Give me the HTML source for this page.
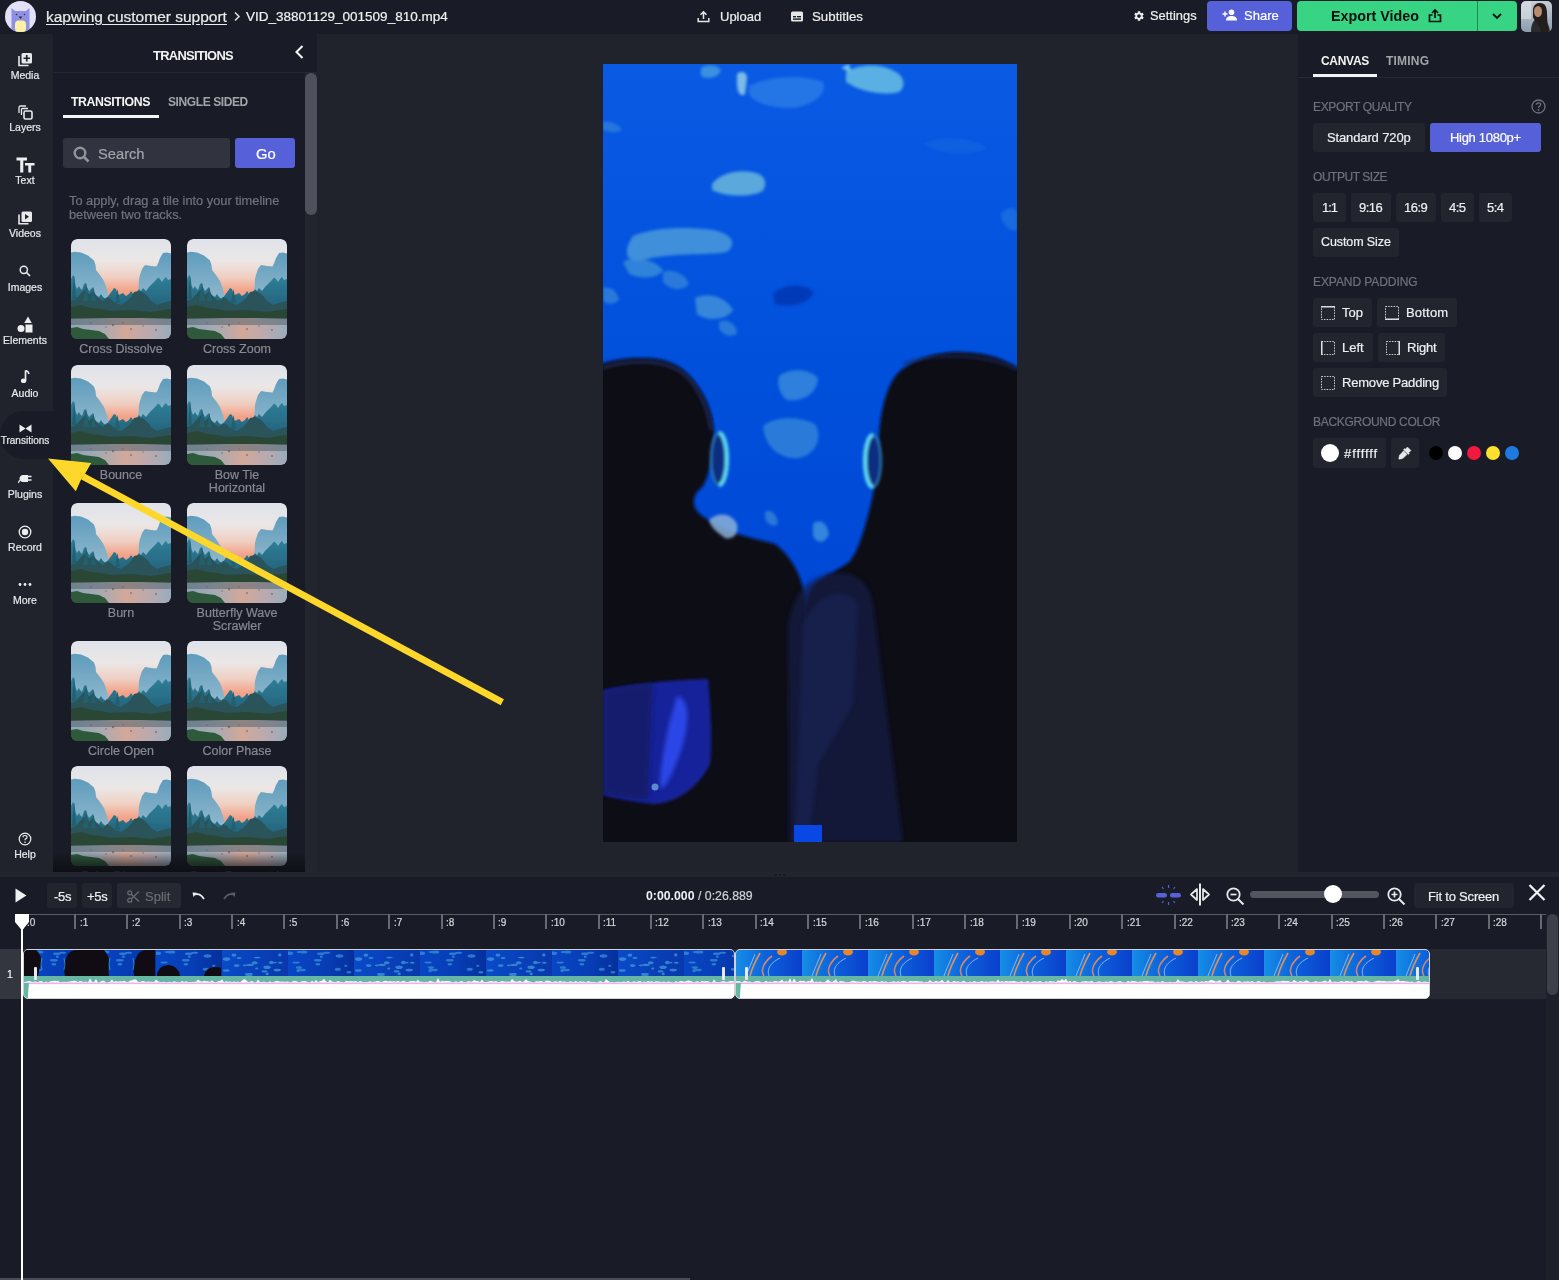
<!DOCTYPE html>
<html><head><meta charset="utf-8">
<style>
*{box-sizing:border-box;margin:0;padding:0}
html,body{width:1559px;height:1280px;overflow:hidden;background:#191c26;font-family:"Liberation Sans",sans-serif;color:#fff}
.t,.sl,.tl{-webkit-text-stroke:0.2px currentColor;will-change:transform}
.t[style*="font-weight:bold"],b{-webkit-text-stroke:0}
.a{position:absolute}
.t{position:absolute;white-space:nowrap;line-height:1}
#top{left:0;top:0;width:1559px;height:34px;background:#191c26}
#side{left:0;top:34px;width:53px;height:838px;background:#20232c}
#panel{left:53px;top:34px;width:264px;height:838px;background:#191c26;overflow:hidden}
#canvas{left:317px;top:34px;width:981px;height:838px;background:#20232c}
#right{left:1298px;top:34px;width:261px;height:838px;background:#191c26}
#strip{left:0;top:872px;width:1559px;height:5px;background:#22252e}
#tl{left:0;top:877px;width:1559px;height:403px;background:#191c26}
.sl{position:absolute;left:0;width:50px;text-align:center;font-size:10.5px;color:#e8e9ec;line-height:1}
.btn{position:absolute;background:#262a33;border-radius:3px}
.lbl{position:absolute;font-size:12.5px;color:#6d7079;white-space:nowrap;line-height:1}
.bt{position:absolute;font-size:13px;color:#eceef1;white-space:nowrap;line-height:1}
.tile{position:absolute;width:100px;height:100px;border-radius:6px;overflow:hidden}
.tl{position:absolute;width:116px;text-align:center;font-size:12.5px;color:#868993;line-height:13px}
</style></head><body>
<div id="top" class="a"></div>
<div id="side" class="a"></div>
<div id="panel" class="a"></div>
<div id="canvas" class="a"></div>
<div id="right" class="a"></div>
<div id="strip" class="a"></div>
<div id="tl" class="a"></div>
<!-- TOP BAR -->
<svg class="a" style="left:5px;top:1px" width="31" height="31" viewBox="0 0 31 31">
 <defs><clipPath id="avc"><circle cx="15.5" cy="15.5" r="15.5"/></clipPath></defs>
 <circle cx="15.5" cy="15.5" r="15.5" fill="#e3e1fa"/>
 <g clip-path="url(#avc)">
  <path d="M6.5 7 L10 10 L21 10 L24.5 7 L24.5 31 L6.5 31 Z" fill="#8d90e4"/>
  <rect x="10" y="19.5" width="11" height="12" rx="4" fill="#fbf1a6"/>
  <path d="M13.5 15.5 L17.5 15.5 L15.5 18 Z" fill="#333"/>
  <circle cx="11.5" cy="13.5" r="0.8" fill="#333"/><circle cx="19.5" cy="13.5" r="0.8" fill="#333"/>
 </g>
</svg>
<div class="t" style="left:46px;top:8.9px;font-size:15.5px;color:#ebebeb;text-decoration:underline;text-underline-offset:2px">kapwing customer support</div>
<svg class="a" style="left:233px;top:11px" width="8" height="11" viewBox="0 0 8 11"><path d="M2 1.5 L6 5.5 L2 9.5" stroke="#ddd" stroke-width="1.6" fill="none"/></svg>
<div class="t" style="left:246px;top:10.1px;font-size:13.5px;color:#f1f1f1">VID_38801129_001509_810.mp4</div>
<!-- upload -->
<svg class="a" style="left:697px;top:10px" width="13" height="13" viewBox="0 0 13 13"><path d="M6.5 9 V2 M3.5 4.8 L6.5 1.8 L9.5 4.8" stroke="#e6e6e6" stroke-width="1.5" fill="none"/><path d="M1.2 8 V11.5 H11.8 V8" stroke="#e6e6e6" stroke-width="1.5" fill="none"/></svg>
<div class="t" style="left:720px;top:10px;font-size:13px;color:#eeeeee">Upload</div>
<svg class="a" style="left:791px;top:11px" width="12" height="11" viewBox="0 0 12 11"><rect x="0" y="0.5" width="12" height="10" rx="1.5" fill="#e6e6e6"/><rect x="2" y="5" width="3" height="1.4" fill="#191c26"/><rect x="6" y="5" width="4" height="1.4" fill="#191c26"/><rect x="2" y="7.4" width="8" height="1.4" fill="#191c26"/></svg>
<div class="t" style="left:812px;top:10px;font-size:13.3px;color:#eeeeee">Subtitles</div>
<!-- settings -->
<svg class="a" style="left:1133px;top:10px" width="12" height="12" viewBox="0 0 24 24"><path fill="#eee" d="M19.14 12.94c.04-.3.06-.61.06-.94 0-.32-.02-.64-.07-.94l2.03-1.58a.49.49 0 0 0 .12-.61l-1.92-3.32a.488.488 0 0 0-.59-.22l-2.39.96c-.5-.38-1.03-.7-1.62-.94l-.36-2.54a.484.484 0 0 0-.48-.41h-3.84c-.24 0-.43.17-.47.41l-.36 2.54c-.59.24-1.13.57-1.62.94l-2.39-.96c-.22-.08-.47 0-.59.22L2.74 8.87c-.12.21-.08.47.12.61l2.03 1.58c-.05.3-.09.63-.09.94s.02.64.07.94l-2.03 1.58a.49.49 0 0 0-.12.61l1.92 3.32c.12.22.37.29.59.22l2.39-.96c.5.38 1.03.7 1.62.94l.36 2.54c.05.24.24.41.48.41h3.84c.24 0 .44-.17.47-.41l.36-2.54c.59-.24 1.13-.56 1.62-.94l2.39.96c.22.08.47 0 .59-.22l1.92-3.32c.12-.22.07-.47-.12-.61l-2.01-1.58zM12 15.6c-1.98 0-3.6-1.62-3.6-3.6s1.62-3.6 3.6-3.6 3.6 1.62 3.6 3.6-1.62 3.6-3.6 3.6z"/></svg>
<div class="t" style="left:1150px;top:10px;font-size:12.9px;color:#eeeeee">Settings</div>
<div class="a" style="left:1207px;top:1px;width:85px;height:30px;background:#5560d9;border-radius:4px"></div>
<svg class="a" style="left:1222px;top:9px" width="15" height="12" viewBox="0 0 15 12"><circle cx="9.5" cy="3.2" r="2.8" fill="#fff"/><path d="M4 11.5 C4 8 6.5 7 9.5 7 S15 8 15 11.5 Z" fill="#fff"/><path d="M0.5 5 H5.5 M3 2.5 V7.5" stroke="#fff" stroke-width="1.4"/></svg>
<div class="t" style="left:1243.5px;top:8.8px;font-size:13px;color:#ffffff">Share</div>
<div class="a" style="left:1297px;top:1px;width:220px;height:30px;background:#36d483;border-radius:4px"></div>
<div class="a" style="left:1477px;top:1px;width:1px;height:30px;background:#1f8a52"></div>
<div class="t" style="left:1331px;top:9px;font-size:14.3px;font-weight:bold;color:#101010">Export Video</div>
<svg class="a" style="left:1428px;top:8px" width="14" height="15" viewBox="0 0 14 15"><path d="M7 10 V2 M4 5 L7 2 L10 5" stroke="#111" stroke-width="1.7" fill="none"/><path d="M4.5 7 H1.5 V13.5 H12.5 V7 H9.5" stroke="#111" stroke-width="1.7" fill="none"/></svg>
<svg class="a" style="left:1491px;top:12px" width="12" height="8" viewBox="0 0 12 8"><path d="M2 2 L6 6 L10 2" stroke="#111" stroke-width="1.8" fill="none"/></svg>
<svg class="a" style="left:1521px;top:1px;border-radius:5px" width="31" height="31" viewBox="0 0 31 31">
 <defs><linearGradient id="avbg" x1="0" y1="0" x2="0" y2="1"><stop offset="0" stop-color="#c5ccd4"/><stop offset="0.5" stop-color="#aab6c2"/><stop offset="1" stop-color="#8a9cae"/></linearGradient></defs>
 <rect width="31" height="31" fill="url(#avbg)"/>
 <rect x="0" y="0" width="10" height="18" fill="#dde2e8" opacity="0.6"/>
 <path d="M10 31 C10 22 13 18 18 17 C24 17 28 22 29 31 Z" fill="#2a2a2e"/>
 <path d="M12 10 C12 3 16 2 19 2 C24 2 26 6 26 12 C26 20 27 26 28 31 L20 31 C20 24 14 22 12 16 Z" fill="#231d1c"/>
 <ellipse cx="17" cy="10.5" rx="4" ry="5.5" fill="#b88a70"/>
</svg>

<!-- SIDEBAR -->
<div class="a" style="left:0;top:411px;width:53px;height:48px;background:#191c26;border-radius:24px 0 0 24px"></div>
<svg class="a" style="left:18px;top:52px" width="15" height="15" viewBox="0 0 15 15"><path d="M1 4 V13.5 H10.5" stroke="#e8e9ec" stroke-width="1.6" fill="none"/><rect x="3.5" y="1" width="10.5" height="10.5" rx="1.5" fill="#e8e9ec"/><path d="M8.75 3 V9.5 M5.5 6.25 H12" stroke="#20232c" stroke-width="1.7"/></svg>
<div class="sl" style="top:69.6px">Media</div>
<svg class="a" style="left:18px;top:105px" width="15" height="15" viewBox="0 0 15 15"><path d="M1 8 V2.5 Q1 1 2.5 1 H8" stroke="#e8e9ec" stroke-width="1.3" fill="none"/><path d="M3.5 10 V4.5 Q3.5 3.5 4.5 3.5 H10" stroke="#e8e9ec" stroke-width="1.3" fill="none"/><rect x="6" y="6" width="8" height="8" rx="1.5" stroke="#e8e9ec" stroke-width="1.6" fill="none"/></svg>
<div class="sl" style="top:122.1px">Layers</div>
<svg class="a" style="left:16px;top:157px" width="19" height="16" viewBox="0 0 19 16"><path d="M0.5 0.5 H11 V3.5 H7.3 V15.5 H4.2 V3.5 H0.5 Z" fill="#eceef0"/><path d="M9 6 H18.5 V8.5 H15.2 V15.5 H12.3 V8.5 H9 Z" fill="#eceef0"/></svg>
<div class="sl" style="top:175.1px">Text</div>
<svg class="a" style="left:18px;top:211px" width="15" height="14" viewBox="0 0 15 14"><path d="M1 3.5 V12.8 H10.5" stroke="#e8e9ec" stroke-width="1.6" fill="none"/><rect x="3.5" y="0.5" width="10.5" height="10.5" rx="1.5" fill="#e8e9ec"/><path d="M7 3 L11 5.75 L7 8.5 Z" fill="#20232c"/></svg>
<div class="sl" style="top:227.6px">Videos</div>
<svg class="a" style="left:19px;top:265px" width="12" height="12" viewBox="0 0 12 12"><circle cx="4.8" cy="4.8" r="3.6" stroke="#e8e9ec" stroke-width="1.5" fill="none"/><path d="M7.5 7.5 L11 11" stroke="#e8e9ec" stroke-width="1.7"/></svg>
<div class="sl" style="top:281.6px">Images</div>
<svg class="a" style="left:17px;top:316px" width="16" height="17" viewBox="0 0 16 17"><path d="M11 0.5 L14.8 7 H7.2 Z" fill="#eceef0"/><circle cx="4" cy="12.5" r="3.5" fill="#eceef0"/><rect x="8.5" y="8.5" width="7" height="8" fill="#eceef0"/></svg>
<div class="sl" style="top:334.6px">Elements</div>
<svg class="a" style="left:20px;top:370px" width="10" height="14" viewBox="0 0 10 14"><path d="M5.5 0.5 V10.5" stroke="#eceef0" stroke-width="1.7"/><path d="M5.5 0.5 Q8.5 1 9 4" stroke="#eceef0" stroke-width="1.6" fill="none"/><ellipse cx="3.6" cy="10.8" rx="2.7" ry="2.3" fill="#eceef0"/></svg>
<div class="sl" style="top:387.6px">Audio</div>
<svg class="a" style="left:19px;top:424px" width="13" height="9" viewBox="0 0 13 9"><path d="M0.5 0.5 L6.5 4.5 L0.5 8.5 Z M12.5 0.5 L6.5 4.5 L12.5 8.5 Z" fill="#eceef0"/></svg>
<div class="sl" style="top:436.3px;font-size:10px">Transitions</div>
<svg class="a" style="left:18px;top:473px" width="14" height="11" viewBox="0 0 14 11"><path d="M5 2 H10 V9 H5 Q2 9 1.5 5.5 Q2 2 5 2 Z" fill="#eceef0"/><path d="M10 3.5 H13.5 M10 7 H13.5" stroke="#eceef0" stroke-width="1.3"/><path d="M2 7 L0 10" stroke="#eceef0" stroke-width="1.3"/></svg>
<div class="sl" style="top:488.6px">Plugins</div>
<svg class="a" style="left:18px;top:525px" width="14" height="14" viewBox="0 0 14 14"><circle cx="7" cy="7" r="5.8" stroke="#eceef0" stroke-width="1.3" fill="none"/><circle cx="7" cy="7" r="3.2" fill="#eceef0"/></svg>
<div class="sl" style="top:541.6px">Record</div>
<svg class="a" style="left:18px;top:582px" width="14" height="5" viewBox="0 0 14 5"><circle cx="2" cy="2.5" r="1.4" fill="#eceef0"/><circle cx="7" cy="2.5" r="1.4" fill="#eceef0"/><circle cx="12" cy="2.5" r="1.4" fill="#eceef0"/></svg>
<div class="sl" style="top:594.6px">More</div>
<svg class="a" style="left:18px;top:832px" width="14" height="14" viewBox="0 0 14 14"><circle cx="7" cy="7" r="5.8" stroke="#eceef0" stroke-width="1.2" fill="none"/><path d="M5 5.3 Q5 3.5 7 3.5 Q9 3.5 9 5.2 Q9 6.3 7.6 6.9 Q7 7.2 7 8.3" stroke="#eceef0" stroke-width="1.2" fill="none"/><circle cx="7" cy="10.2" r="0.8" fill="#eceef0"/></svg>
<div class="sl" style="top:848.6px">Help</div>

<!-- PANEL -->
<svg width="0" height="0" style="position:absolute">
 <defs>
  <linearGradient id="sky" x1="0" y1="0" x2="0" y2="1">
   <stop offset="0" stop-color="#dfe3ea"/><stop offset="0.22" stop-color="#ebe7e6"/><stop offset="0.38" stop-color="#f0cfc2"/><stop offset="0.52" stop-color="#f2a288"/><stop offset="0.7" stop-color="#ee9a80"/>
  </linearGradient>
  <linearGradient id="mtn" x1="0" y1="0" x2="0" y2="1">
   <stop offset="0" stop-color="#5f9cbd"/><stop offset="1" stop-color="#9bbfd0"/>
  </linearGradient>
  <linearGradient id="water" x1="0" y1="0" x2="1" y2="0">
   <stop offset="0" stop-color="#8ea6b4"/><stop offset="0.3" stop-color="#a8aab2"/><stop offset="0.55" stop-color="#d3a898"/><stop offset="0.8" stop-color="#b8aab0"/><stop offset="1" stop-color="#98acbc"/>
  </linearGradient>
  <filter id="bl" x="-5%" y="-5%" width="110%" height="110%"><feGaussianBlur stdDeviation="0.5"/></filter>
  <linearGradient id="forest" x1="0" y1="0" x2="0" y2="1"><stop offset="0" stop-color="#2f8098"/><stop offset="1" stop-color="#24607a"/></linearGradient>
  <symbol id="land" viewBox="0 0 100 100">
   <rect width="100" height="100" fill="url(#sky)"/>
   <g filter="url(#bl)">
   <path d="M0 13.5 L4 12.8 L10 13.5 L17 16.5 L23 21.5 L24.5 26 L25 31 L29 36 L33 42 L36 50 L37.5 56 L38 62 L38 72 L0 72 Z" fill="url(#mtn)"/>
   <path d="M100 14.5 L96 13.5 L92 14 L89 19 L87 24.5 L85.5 27.5 L80 27 L74 26 L71 30 L69 36 L68 40 L67.5 50 L66 56 L62 60 L62 72 L100 72 Z" fill="url(#mtn)"/>
   <path d="M0 72 L0 40 L2 36 L3.5 38 L4.5 46 L6 50 L8 47 L9 49 L11 51 L13 45 L15 44 L16 48 L18 52 L20 50 L22 48 L23 53 L25 56 L28 58 L30 55 L32 58 L35 60 L38 56 L41 52 L43 49 L45 50 L47 56 L50 55 L52 54 L55 57 L58 55 L60 52 L62 55 L65 54 L68 50 L70 52 L72 49 L75 52 L78 48 L82 44 L85 41 L87 38.5 L89 40 L91 43 L93 40 L95 38 L97 41 L100 40 L100 72 Z" fill="url(#forest)"/>
   <path d="M0 80 L0 62 L5 60 L12 52 L15 50 L18 56 L22 52 L26 58 L32 62 L36 58 L40 60 L44 64 L50 66 L56 62 L60 58 L63 53 L68 52 L73 54 L77 58 L80 62 L86 66 L92 64 L100 62 L100 80 Z" fill="#29525a"/>
   <path d="M0 68 L10 66 L20 69 L30 70 L40 72 L60 71 L80 73 L100 70 L100 81 L0 81 Z" fill="#2c4636"/>
   <path d="M0 80 L40 79 L70 79 L100 80 L100 100 L0 100 Z" fill="url(#water)"/>
   <g fill="#4a5560" opacity="0.6"><circle cx="42" cy="86" r="1.2"/><circle cx="35" cy="88" r="0.8"/><circle cx="60" cy="90" r="0.9"/><circle cx="85" cy="91" r="1"/><circle cx="52" cy="84" r="0.7"/><circle cx="72" cy="87" r="0.8"/><circle cx="20" cy="84" r="0.8"/></g>
   <rect x="0" y="79" width="100" height="7" fill="#56656f" opacity="0.55"/>
   <path d="M0 89 L6 88 L12 90 L20 91 L28 92 L34 95 L38 100 L0 100 Z" fill="#2f5a3a"/>
   <path d="M1 60 L3 36 L5 60 Z M12 62 L15 44 L18 62 Z M20 62 L22.5 48 L25 62 Z M44 64 L46.5 50 L49 64 Z" fill="#24606e"/>
   </g>
  </symbol>
 </defs>
</svg>
<div class="t" style="left:152.5px;top:50.1px;font-size:12.9px;font-weight:bold;letter-spacing:-0.67px;color:#f3f3f3">TRANSITIONS</div>
<svg class="a" style="left:293px;top:44px" width="12" height="16" viewBox="0 0 12 16"><path d="M9.5 2 L3.5 8 L9.5 14" stroke="#f3f3f3" stroke-width="2.1" fill="none"/></svg>
<div class="a" style="left:53px;top:72px;width:264px;height:1px;background:#252832"></div>
<div class="a" style="left:305px;top:73px;width:12px;height:799px;background:#22252e"></div>
<div class="a" style="left:305px;top:73px;width:12px;height:142px;background:#4e515b;border-radius:6px"></div>
<div class="t" style="left:71.4px;top:95.7px;font-size:12.3px;font-weight:bold;letter-spacing:-0.4px;color:#f5f5f5">TRANSITIONS</div>
<div class="a" style="left:63px;top:115px;width:96px;height:3px;background:#f5f5f5"></div>
<div class="t" style="left:167.5px;top:95.8px;font-size:12px;font-weight:bold;letter-spacing:-0.4px;color:#a3a4a8">SINGLE SIDED</div>
<div class="a" style="left:63px;top:138px;width:167px;height:30px;background:#31343e;border-radius:3px"></div>
<svg class="a" style="left:72.5px;top:145.5px" width="17" height="17" viewBox="0 0 17 17"><circle cx="7" cy="7" r="5.3" stroke="#92949b" stroke-width="2.4" fill="none"/><path d="M11 11 L15.5 15.5" stroke="#92949b" stroke-width="2.6"/></svg>
<div class="t" style="left:98px;top:146.8px;font-size:14.7px;color:#a2a4aa">Search</div>
<div class="a" style="left:235px;top:138px;width:60px;height:30px;background:#5560d9;border-radius:3px"></div>
<div class="t" style="left:256px;top:147px;font-size:14.8px;color:#ffffff">Go</div>
<div class="t" style="left:69px;top:195px;font-size:12.8px;color:#70737c">To apply, drag a tile into your timeline</div>
<div class="t" style="left:69px;top:209px;font-size:12.8px;color:#70737c">between two tracks.</div>
<svg class="a" style="left:71px;top:239px;border-radius:6px" width="100" height="100"><use href="#land"/></svg>
<div class="a" style="left:71px;top:239px;width:100px;height:100px;border-radius:6px;box-shadow:0 0 0 3px #191c26"></div>
<div class="tl" style="left:63px;top:343px">Cross Dissolve</div>
<svg class="a" style="left:187px;top:239px;border-radius:6px" width="100" height="100"><use href="#land"/></svg>
<div class="a" style="left:187px;top:239px;width:100px;height:100px;border-radius:6px;box-shadow:0 0 0 3px #191c26"></div>
<div class="tl" style="left:179px;top:343px">Cross Zoom</div>
<svg class="a" style="left:71px;top:365px;border-radius:6px" width="100" height="100"><use href="#land"/></svg>
<div class="a" style="left:71px;top:365px;width:100px;height:100px;border-radius:6px;box-shadow:0 0 0 3px #191c26"></div>
<div class="tl" style="left:63px;top:469px">Bounce</div>
<svg class="a" style="left:187px;top:365px;border-radius:6px" width="100" height="100"><use href="#land"/></svg>
<div class="a" style="left:187px;top:365px;width:100px;height:100px;border-radius:6px;box-shadow:0 0 0 3px #191c26"></div>
<div class="tl" style="left:179px;top:469px">Bow Tie</div>
<div class="tl" style="left:179px;top:482px">Horizontal</div>
<svg class="a" style="left:71px;top:503px;border-radius:6px" width="100" height="100"><use href="#land"/></svg>
<div class="a" style="left:71px;top:503px;width:100px;height:100px;border-radius:6px;box-shadow:0 0 0 3px #191c26"></div>
<div class="tl" style="left:63px;top:607px">Burn</div>
<svg class="a" style="left:187px;top:503px;border-radius:6px" width="100" height="100"><use href="#land"/></svg>
<div class="a" style="left:187px;top:503px;width:100px;height:100px;border-radius:6px;box-shadow:0 0 0 3px #191c26"></div>
<div class="tl" style="left:179px;top:607px">Butterfly Wave</div>
<div class="tl" style="left:179px;top:620px">Scrawler</div>
<svg class="a" style="left:71px;top:641px;border-radius:6px" width="100" height="100"><use href="#land"/></svg>
<div class="a" style="left:71px;top:641px;width:100px;height:100px;border-radius:6px;box-shadow:0 0 0 3px #191c26"></div>
<div class="tl" style="left:63px;top:745px">Circle Open</div>
<svg class="a" style="left:187px;top:641px;border-radius:6px" width="100" height="100"><use href="#land"/></svg>
<div class="a" style="left:187px;top:641px;width:100px;height:100px;border-radius:6px;box-shadow:0 0 0 3px #191c26"></div>
<div class="tl" style="left:179px;top:745px">Color Phase</div>
<svg class="a" style="left:71px;top:766px;border-radius:6px" width="100" height="100"><use href="#land"/></svg>
<div class="a" style="left:71px;top:766px;width:100px;height:100px;border-radius:6px;box-shadow:0 0 0 3px #191c26"></div>
<div class="tl" style="left:63px;top:870px;height:2px;overflow:hidden">Color Distance</div>
<svg class="a" style="left:187px;top:766px;border-radius:6px" width="100" height="100"><use href="#land"/></svg>
<div class="a" style="left:187px;top:766px;width:100px;height:100px;border-radius:6px;box-shadow:0 0 0 3px #191c26"></div>
<div class="tl" style="left:179px;top:870px;height:2px;overflow:hidden">Crazy Parametric</div>
<div class="a" style="left:53px;top:852px;width:252px;height:20px;background:linear-gradient(rgba(12,13,18,0),rgba(12,13,18,0.85))"></div>
<!-- VIDEO PREVIEW -->
<svg class="a" style="left:603px;top:64px" width="414" height="778" viewBox="0 0 414 778">
 <defs>
  <linearGradient id="vbg" x1="0" y1="0" x2="0" y2="1">
   <stop offset="0" stop-color="#0a5ae4"/><stop offset="0.4" stop-color="#0050dc"/><stop offset="0.75" stop-color="#0046d4"/><stop offset="1" stop-color="#0040c8"/>
  </linearGradient>
  <radialGradient id="bag" cx="0.4" cy="0.4" r="0.7">
   <stop offset="0" stop-color="#2a44d0"/><stop offset="0.6" stop-color="#1a2a9a"/><stop offset="1" stop-color="#10166a"/>
  </radialGradient>
  <radialGradient id="body2" cx="0.3" cy="0.3" r="0.8">
   <stop offset="0" stop-color="#22306a"/><stop offset="0.5" stop-color="#151c44"/><stop offset="1" stop-color="#0e0d24"/>
  </radialGradient>
  <filter id="vb1" x="-20%" y="-20%" width="140%" height="140%"><feGaussianBlur stdDeviation="2"/></filter>
  <filter id="vb2" x="-20%" y="-20%" width="140%" height="140%"><feGaussianBlur stdDeviation="1.4"/></filter>
 </defs>
 <rect width="414" height="778" fill="url(#vbg)"/>
 <g filter="url(#vb2)">
  <path d="M243 8 C255 0 280 -2 296 10 C302 16 302 24 296 28 C280 32 258 28 243 18 Z" fill="#5ab0e2"/>
  <path d="M238 4 L246 0 L248 8 Z" fill="#7ac8ea"/>
  <path d="M146 22 C165 12 200 10 220 18 C224 28 215 40 190 44 C165 44 150 38 146 30 Z" fill="#2a7ce6" opacity="0.8"/>
  <path d="M134 10 C138 6 144 8 144 14 L142 30 C138 34 134 28 134 20 Z" fill="#8ac6e8" opacity="0.9"/>
  <path d="M98 4 C104 0 114 0 118 6 C116 14 104 16 98 12 Z" fill="#4a9ee0" opacity="0.8"/>
  <path d="M109 120 C118 108 140 104 156 110 C164 114 164 124 158 128 C142 134 120 132 109 126 Z" fill="#5aa8dc"/>
  <path d="M30 172 C50 164 80 162 110 166 C130 170 134 180 124 188 C100 192 70 188 40 196 C25 200 18 190 30 172 Z" fill="#4a9ada" opacity="0.85"/>
  <path d="M20 198 C30 192 50 194 60 206 C56 214 40 216 26 210 Z" fill="#3c8ed8" opacity="0.8"/>
  <path d="M60 208 C70 204 82 210 86 220 C80 228 66 226 60 218 Z" fill="#3a8ad8" opacity="0.7"/>
  <path d="M92 234 C104 228 122 232 130 246 C124 256 104 258 94 250 Z" fill="#4494da" opacity="0.8"/>
  <path d="M116 258 C124 254 134 260 134 270 C126 274 118 270 116 264 Z" fill="#3a8ad8" opacity="0.7"/>
  <path d="M0 224 C6 222 14 226 16 236 C10 242 2 240 0 236 Z" fill="#3a8ad8" opacity="0.7"/>
  <path d="M0 58 C6 56 16 60 19 66 C12 70 4 68 0 66 Z" fill="#3a8ad8" opacity="0.6"/>
  <path d="M170 230 C180 220 200 218 211 228 C206 240 188 244 172 240 Z" fill="#0636b4" opacity="0.9"/>
  <path d="M398 150 C404 142 414 142 414 150 L414 166 C406 168 398 160 398 150 Z" fill="#2a78e0" opacity="0.6"/>
  <path d="M176 312 C186 304 206 304 215 314 C214 330 200 338 184 336 C176 330 174 320 176 312 Z" fill="#3c90dc" opacity="0.75"/>
  <path d="M160 362 C172 352 196 352 212 360 C220 372 214 390 196 394 C178 396 162 384 160 362 Z" fill="#3c8ed8" opacity="0.7"/>
  <path d="M162 448 C168 444 174 450 175 460 C170 464 164 460 162 454 Z" fill="#3a8ad8" opacity="0.7"/>
  <path d="M210 460 C216 454 224 458 226 470 C222 480 214 480 210 472 Z" fill="#4a9ee0" opacity="0.7"/>
  <path d="M320 80 C340 70 370 74 384 84 C370 92 340 92 320 80 Z" fill="#1a68e0" opacity="0.5"/>
 </g>
 <!-- left person -->
 <path filter="url(#vb2)" d="M-10 790 L-10 302 C10 296 20 294 40 294 C65 294 80 302 92 318 C104 334 110 350 111 368 C111 390 106 412 100 422 C94 428 90 432 91 440 C92 448 100 453 112 460 C128 470 150 474 172 480 C188 492 200 512 203 540 L205 790 Z" fill="#100c18"/>
 <!-- right person -->
 <path filter="url(#vb2)" d="M424 790 L424 310 C400 292 380 288 350 288 C325 290 305 298 293 311 C283 325 278 345 276 370 C275 400 272 425 266 448 C260 470 255 488 246 498 C232 508 218 514 210 522 C204 532 201 545 201 556 L199 790 Z" fill="#100c18"/>
 <path filter="url(#vb1)" d="M186 778 L185 560 C190 530 205 515 225 510 C250 506 265 515 270 540 L300 778 Z" fill="#141d44" opacity="0.75"/>
 <path filter="url(#vb1)" d="M200 560 C215 530 240 520 255 540 L250 640 L215 700 L205 778 L192 778 Z" fill="#1a2c62" opacity="0.45"/>
 <path filter="url(#vb2)" d="M0 626 C30 620 70 616 105 615 C108 650 109 680 107 700 C95 725 70 740 50 740 C30 738 12 734 0 731 Z" fill="#18249a"/>
 <path filter="url(#vb1)" d="M0 628 C20 622 40 620 50 620 L45 735 C30 735 12 733 0 730 Z" fill="#141a66" opacity="0.85"/>
 <path filter="url(#vb1)" d="M74 632 C84 634 88 650 80 680 C72 705 64 722 58 725 C55 715 60 690 66 660 Z" fill="#2e4cf0" opacity="0.9"/>
 <circle cx="52" cy="723" r="3.5" fill="#5a8ad0"/>
 <rect x="191" y="761" width="28" height="17" fill="#0a48e6"/>
 <!-- headphones -->
 <g filter="url(#vb2)">
  <ellipse cx="116" cy="395" rx="8" ry="26" stroke="#2a7ab8" stroke-width="2" fill="#0a2f80"/><path d="M116 369 A8 26 0 0 1 116 421" stroke="#62dcf0" stroke-width="4" fill="none"/>
  <ellipse cx="270" cy="397" rx="8" ry="26" stroke="#2a7ab8" stroke-width="2" fill="#0a2f80"/><path d="M270 371 A8 26 0 0 0 270 423" stroke="#62dcf0" stroke-width="4" fill="none"/>
  <path d="M106 456 C114 448 128 448 134 460 C136 470 130 476 122 474 C114 468 108 464 106 456 Z" fill="#8ab0d8" opacity="0.85"/>
 </g>
 <path d="M0 304 C10 300 20 298 40 298 C65 298 80 306 90 320 C100 334 106 350 108 366" stroke="#26336e" stroke-width="3" fill="none" opacity="0.7" filter="url(#vb2)"/>
 <path d="M300 300 C315 294 335 292 355 292 C380 293 400 298 414 306" stroke="#1e2a5e" stroke-width="3" fill="none" opacity="0.6" filter="url(#vb2)"/>
</svg>

<!-- RIGHT PANEL -->
<div class="t" style="left:1321px;top:54.5px;font-size:12px;font-weight:bold;letter-spacing:-0.3px;color:#f3f3f3">CANVAS</div>
<div class="t" style="left:1385.5px;top:54.5px;font-size:12px;font-weight:bold;letter-spacing:0.2px;color:#a3a4a8">TIMING</div>
<div class="a" style="left:1298px;top:77px;width:261px;height:1px;background:#262932"></div>
<div class="a" style="left:1313px;top:74px;width:64px;height:3px;background:#f3f3f3"></div>
<div class="t" style="left:1313.3px;top:100.9px;font-size:12px;letter-spacing:-0.35px;color:#6f727b">EXPORT QUALITY</div>
<svg class="a" style="left:1530px;top:98px" width="17" height="17" viewBox="0 0 17 17"><circle cx="8.5" cy="8.5" r="6.5" stroke="#6f727b" stroke-width="1.3" fill="none"/><path d="M6.4 6.8 Q6.4 4.8 8.5 4.8 Q10.6 4.8 10.6 6.6 Q10.6 7.7 9.4 8.3 Q8.5 8.8 8.5 10" stroke="#6f727b" stroke-width="1.3" fill="none"/><circle cx="8.5" cy="12" r="0.9" fill="#6f727b"/></svg>
<div class="btn" style="left:1313px;top:123px;width:112px;height:29px;background:#22252e"></div>
<div class="t" style="left:1327px;top:131.3px;font-size:13px;letter-spacing:-0.13px;color:#eef0f3">Standard 720p</div>
<div class="btn" style="left:1430px;top:123px;width:111px;height:29px;background:#5560d9"></div>
<div class="t" style="left:1450.3px;top:131.3px;font-size:13px;letter-spacing:-0.3px;color:#ffffff">High 1080p+</div>
<div class="t" style="left:1313.3px;top:170.7px;font-size:12px;letter-spacing:-0.45px;color:#6f727b">OUTPUT SIZE</div>
<div class="btn" style="left:1313px;top:193px;width:33px;height:29px;background:#22252e"></div>
<div class="t" style="left:1321.6px;top:201.1px;font-size:13px;letter-spacing:-1px;color:#eef0f3">1:1</div>
<div class="btn" style="left:1351px;top:193px;width:40px;height:29px;background:#22252e"></div>
<div class="t" style="left:1359.3px;top:201.1px;font-size:13px;letter-spacing:-0.5px;color:#eef0f3">9:16</div>
<div class="btn" style="left:1396px;top:193px;width:40px;height:29px;background:#22252e"></div>
<div class="t" style="left:1404.3px;top:201.1px;font-size:13px;letter-spacing:-0.5px;color:#eef0f3">16:9</div>
<div class="btn" style="left:1441px;top:193px;width:33px;height:29px;background:#22252e"></div>
<div class="t" style="left:1449px;top:201.1px;font-size:13px;letter-spacing:-0.5px;color:#eef0f3">4:5</div>
<div class="btn" style="left:1479px;top:193px;width:33px;height:29px;background:#22252e"></div>
<div class="t" style="left:1487px;top:201.1px;font-size:13px;letter-spacing:-0.5px;color:#eef0f3">5:4</div>
<div class="btn" style="left:1313px;top:228px;width:86px;height:29px;background:#22252e"></div>
<div class="t" style="left:1321.3px;top:236.3px;font-size:12.5px;letter-spacing:-0.1px;color:#eef0f3">Custom Size</div>
<div class="t" style="left:1313.3px;top:275.9px;font-size:12px;letter-spacing:-0.07px;color:#6f727b">EXPAND PADDING</div>
<div class="btn" style="left:1313px;top:298px;width:59px;height:29px;background:#22252e"></div>
<div class="btn" style="left:1377px;top:298px;width:80px;height:29px;background:#22252e"></div>
<div class="btn" style="left:1313px;top:333px;width:60px;height:29px;background:#22252e"></div>
<div class="btn" style="left:1378px;top:333px;width:67px;height:29px;background:#22252e"></div>
<div class="btn" style="left:1313px;top:368px;width:134px;height:29px;background:#22252e"></div>
<svg class="a" style="left:1321px;top:306px" width="14" height="14" viewBox="0 0 14 14"><rect x="0.5" y="0.5" width="13" height="13" stroke="#cfd1d6" stroke-width="1" stroke-dasharray="1.5 1.2" fill="none"/><path d="M0 0.8 H14" stroke="#e6e7ea" stroke-width="1.4"/></svg>
<div class="t" style="left:1342.4px;top:306.1px;font-size:13px;letter-spacing:0px;color:#eef0f3">Top</div>
<svg class="a" style="left:1385px;top:306px" width="14" height="14" viewBox="0 0 14 14"><rect x="0.5" y="0.5" width="13" height="13" stroke="#cfd1d6" stroke-width="1" stroke-dasharray="1.5 1.2" fill="none"/><path d="M0 13.2 H14" stroke="#e6e7ea" stroke-width="1.4"/></svg>
<div class="t" style="left:1406px;top:306.1px;font-size:13px;letter-spacing:0.2px;color:#eef0f3">Bottom</div>
<svg class="a" style="left:1321px;top:341px" width="14" height="14" viewBox="0 0 14 14"><rect x="0.5" y="0.5" width="13" height="13" stroke="#cfd1d6" stroke-width="1" stroke-dasharray="1.5 1.2" fill="none"/><path d="M0.8 0 V14" stroke="#e6e7ea" stroke-width="1.4"/></svg>
<div class="t" style="left:1342.4px;top:341.1px;font-size:13px;color:#eef0f3">Left</div>
<svg class="a" style="left:1386px;top:341px" width="14" height="14" viewBox="0 0 14 14"><rect x="0.5" y="0.5" width="13" height="13" stroke="#cfd1d6" stroke-width="1" stroke-dasharray="1.5 1.2" fill="none"/><path d="M13.2 0 V14" stroke="#e6e7ea" stroke-width="1.4"/></svg>
<div class="t" style="left:1407px;top:341.1px;font-size:13px;letter-spacing:-0.2px;color:#eef0f3">Right</div>
<svg class="a" style="left:1321px;top:376px" width="14" height="14" viewBox="0 0 14 14"><rect x="0.5" y="0.5" width="13" height="13" stroke="#cfd1d6" stroke-width="1" stroke-dasharray="1.5 1.2" fill="none"/></svg>
<div class="t" style="left:1342.4px;top:376.1px;font-size:13px;letter-spacing:-0.2px;color:#eef0f3">Remove Padding</div>
<div class="t" style="left:1313.3px;top:415.5px;font-size:12px;letter-spacing:-0.3px;color:#6f727b">BACKGROUND COLOR</div>
<div class="btn" style="left:1313px;top:438px;width:73px;height:30px;background:#22252e"></div>
<div class="a" style="left:1321px;top:444px;width:18px;height:18px;border-radius:9px;background:#fff"></div>
<div class="t" style="left:1344px;top:447.2px;font-size:13px;letter-spacing:0.9px;color:#eef0f3">#ffffff</div>
<div class="btn" style="left:1391px;top:438px;width:28px;height:30px;background:#22252e"></div>
<svg class="a" style="left:1398px;top:446px" width="14" height="14" viewBox="0 0 14 14"><path d="M1.35 13.35 L4.75 12.5 L9.13 8.41 L5.6 4.87 L1.5 9.25 L0.65 12.65 Z" fill="#e8e9ec" stroke="#e8e9ec" stroke-width="0.4" stroke-linejoin="round"/><path d="M10.33 8.61 L11.39 7.55 L10.69 6.85 L13.02 4.52 L9.48 0.98 L7.15 3.31 L6.45 2.61 L5.39 3.67 Z" fill="#e8e9ec" stroke="#e8e9ec" stroke-width="0.4" stroke-linejoin="round"/></svg>
<div class="a" style="left:1429px;top:446px;width:14px;height:14px;border-radius:7px;background:#000"></div>
<div class="a" style="left:1448px;top:446px;width:14px;height:14px;border-radius:7px;background:#fff"></div>
<div class="a" style="left:1467px;top:446px;width:14px;height:14px;border-radius:7px;background:#f0193f"></div>
<div class="a" style="left:1486px;top:446px;width:14px;height:14px;border-radius:7px;background:#fde12e"></div>
<div class="a" style="left:1505px;top:446px;width:14px;height:14px;border-radius:7px;background:#1f7ae0"></div>

<svg class="a" style="left:774px;top:873px" width="12" height="4" viewBox="0 0 12 4"><circle cx="2" cy="2" r="1" fill="#15171e"/><circle cx="6" cy="2" r="1" fill="#15171e"/><circle cx="10" cy="2" r="1" fill="#15171e"/></svg>
<!-- TIMELINE -->
<svg class="a" style="left:15px;top:888px" width="12" height="15" viewBox="0 0 12 15"><path d="M0.5 0.5 L11.5 7.5 L0.5 14.5 Z" fill="#f0f0f0"/></svg>
<div class="btn" style="left:47px;top:883px;width:30px;height:25px;background:#22252e"></div>
<div class="t" style="left:53.5px;top:889.5px;font-size:13px;letter-spacing:-0.3px;color:#eef0f3">-5s</div>
<div class="btn" style="left:82px;top:883px;width:30px;height:25px;background:#22252e"></div>
<div class="t" style="left:86.5px;top:889.5px;font-size:13px;letter-spacing:-0.3px;color:#eef0f3">+5s</div>
<div class="btn" style="left:117px;top:883px;width:64px;height:25px;background:#262932"></div>
<svg class="a" style="left:127px;top:890px" width="13" height="13" viewBox="0 0 13 13"><circle cx="2.8" cy="2.8" r="2" stroke="#6a6d75" stroke-width="1.2" fill="none"/><circle cx="2.8" cy="10.2" r="2" stroke="#6a6d75" stroke-width="1.2" fill="none"/><path d="M4.3 4.2 L12 11.5 M4.3 8.8 L12 1.5" stroke="#6a6d75" stroke-width="1.2"/></svg>
<div class="t" style="left:145px;top:889.5px;font-size:13px;color:#6a6d75">Split</div>
<svg class="a" style="left:192px;top:892px" width="13" height="9" viewBox="0 0 13 9"><path d="M3 2.5 Q8 1 12 7" stroke="#eef0f3" stroke-width="1.8" fill="none"/><path d="M0.5 0.5 L5 0.8 L1.5 5 Z" fill="#eef0f3"/></svg>
<svg class="a" style="left:223px;top:892px" width="13" height="9" viewBox="0 0 13 9"><path d="M10 2.5 Q5 1 1 7" stroke="#5a5d65" stroke-width="1.8" fill="none"/><path d="M12.5 0.5 L8 0.8 L11.5 5 Z" fill="#5a5d65"/></svg>
<div class="t" style="left:645.5px;top:890.2px;font-size:12.3px;color:#eef0f3"><b>0:00.000</b><span style="color:#d0d2d6"> / 0:26.889</span></div>
<svg class="a" style="left:1156px;top:885px" width="26" height="20" viewBox="0 0 26 20"><rect x="0" y="8" width="11" height="4.5" rx="2.2" fill="#5560d9"/><rect x="14" y="8" width="11" height="4.5" rx="2.2" fill="#5560d9"/><path d="M12.5 0 V3 M12.5 17 V20 M6 2 L7.5 4 M19 2 L17.5 4 M6 18 L7.5 16 M19 18 L17.5 16" stroke="#5560d9" stroke-width="1.2"/></svg>
<svg class="a" style="left:1189px;top:883px" width="22" height="23" viewBox="0 0 22 23"><path d="M11 0.5 V22.5" stroke="#e8e9ec" stroke-width="2"/><path d="M8 6 L2 11.5 L8 17 Z M14 6 L20 11.5 L14 17 Z" stroke="#e8e9ec" stroke-width="1.7" fill="none" stroke-linejoin="round"/></svg>
<svg class="a" style="left:1226px;top:887px" width="19" height="18" viewBox="0 0 19 18"><circle cx="7.5" cy="7.5" r="6.2" stroke="#e8e9ec" stroke-width="1.8" fill="none"/><path d="M4.5 7.5 H10.5" stroke="#e8e9ec" stroke-width="1.7"/><path d="M12 12 L17.5 17.5" stroke="#e8e9ec" stroke-width="2"/></svg>
<div class="a" style="left:1250px;top:891px;width:129px;height:7px;border-radius:3.5px;background:#52555e"></div>
<div class="a" style="left:1324px;top:885px;width:18px;height:18px;border-radius:9px;background:#ffffff"></div>
<svg class="a" style="left:1387px;top:887px" width="19" height="18" viewBox="0 0 19 18"><circle cx="7.5" cy="7.5" r="6.2" stroke="#e8e9ec" stroke-width="1.8" fill="none"/><path d="M4.5 7.5 H10.5 M7.5 4.5 V10.5" stroke="#e8e9ec" stroke-width="1.7"/><path d="M12 12 L17.5 17.5" stroke="#e8e9ec" stroke-width="2"/></svg>
<div class="btn" style="left:1414px;top:883px;width:100px;height:25px;background:#22252e"></div>
<div class="t" style="left:1428.4px;top:889.5px;font-size:13px;letter-spacing:-0.2px;color:#eef0f3">Fit to Screen</div>
<svg class="a" style="left:1528px;top:884px" width="18" height="17" viewBox="0 0 18 17"><path d="M1.5 1 L16.5 16 M16.5 1 L1.5 16" stroke="#f3f3f3" stroke-width="2.2"/></svg>
<div class="a" style="left:20px;top:914px;width:1526px;height:1px;background:#5a5d66"></div>

<div class="a" style="left:21.6px;top:914px;width:2px;height:15px;background:#676a72"></div>
<div class="t" style="left:27.1px;top:917.7px;font-size:10px;color:#d6d7da">:0</div>
<div class="a" style="left:74.0px;top:914px;width:2px;height:15px;background:#676a72"></div>
<div class="t" style="left:79.5px;top:917.7px;font-size:10px;color:#d6d7da">:1</div>
<div class="a" style="left:126.3px;top:914px;width:2px;height:15px;background:#676a72"></div>
<div class="t" style="left:131.8px;top:917.7px;font-size:10px;color:#d6d7da">:2</div>
<div class="a" style="left:178.7px;top:914px;width:2px;height:15px;background:#676a72"></div>
<div class="t" style="left:184.2px;top:917.7px;font-size:10px;color:#d6d7da">:3</div>
<div class="a" style="left:231.0px;top:914px;width:2px;height:15px;background:#676a72"></div>
<div class="t" style="left:236.5px;top:917.7px;font-size:10px;color:#d6d7da">:4</div>
<div class="a" style="left:283.4px;top:914px;width:2px;height:15px;background:#676a72"></div>
<div class="t" style="left:288.9px;top:917.7px;font-size:10px;color:#d6d7da">:5</div>
<div class="a" style="left:335.8px;top:914px;width:2px;height:15px;background:#676a72"></div>
<div class="t" style="left:341.3px;top:917.7px;font-size:10px;color:#d6d7da">:6</div>
<div class="a" style="left:388.1px;top:914px;width:2px;height:15px;background:#676a72"></div>
<div class="t" style="left:393.6px;top:917.7px;font-size:10px;color:#d6d7da">:7</div>
<div class="a" style="left:440.5px;top:914px;width:2px;height:15px;background:#676a72"></div>
<div class="t" style="left:446.0px;top:917.7px;font-size:10px;color:#d6d7da">:8</div>
<div class="a" style="left:492.8px;top:914px;width:2px;height:15px;background:#676a72"></div>
<div class="t" style="left:498.3px;top:917.7px;font-size:10px;color:#d6d7da">:9</div>
<div class="a" style="left:545.2px;top:914px;width:2px;height:15px;background:#676a72"></div>
<div class="t" style="left:550.7px;top:917.7px;font-size:10px;color:#d6d7da">:10</div>
<div class="a" style="left:597.6px;top:914px;width:2px;height:15px;background:#676a72"></div>
<div class="t" style="left:603.1px;top:917.7px;font-size:10px;color:#d6d7da">:11</div>
<div class="a" style="left:649.9px;top:914px;width:2px;height:15px;background:#676a72"></div>
<div class="t" style="left:655.4px;top:917.7px;font-size:10px;color:#d6d7da">:12</div>
<div class="a" style="left:702.3px;top:914px;width:2px;height:15px;background:#676a72"></div>
<div class="t" style="left:707.8px;top:917.7px;font-size:10px;color:#d6d7da">:13</div>
<div class="a" style="left:754.6px;top:914px;width:2px;height:15px;background:#676a72"></div>
<div class="t" style="left:760.1px;top:917.7px;font-size:10px;color:#d6d7da">:14</div>
<div class="a" style="left:807.0px;top:914px;width:2px;height:15px;background:#676a72"></div>
<div class="t" style="left:812.5px;top:917.7px;font-size:10px;color:#d6d7da">:15</div>
<div class="a" style="left:859.4px;top:914px;width:2px;height:15px;background:#676a72"></div>
<div class="t" style="left:864.9px;top:917.7px;font-size:10px;color:#d6d7da">:16</div>
<div class="a" style="left:911.7px;top:914px;width:2px;height:15px;background:#676a72"></div>
<div class="t" style="left:917.2px;top:917.7px;font-size:10px;color:#d6d7da">:17</div>
<div class="a" style="left:964.1px;top:914px;width:2px;height:15px;background:#676a72"></div>
<div class="t" style="left:969.6px;top:917.7px;font-size:10px;color:#d6d7da">:18</div>
<div class="a" style="left:1016.4px;top:914px;width:2px;height:15px;background:#676a72"></div>
<div class="t" style="left:1021.9px;top:917.7px;font-size:10px;color:#d6d7da">:19</div>
<div class="a" style="left:1068.8px;top:914px;width:2px;height:15px;background:#676a72"></div>
<div class="t" style="left:1074.3px;top:917.7px;font-size:10px;color:#d6d7da">:20</div>
<div class="a" style="left:1121.2px;top:914px;width:2px;height:15px;background:#676a72"></div>
<div class="t" style="left:1126.7px;top:917.7px;font-size:10px;color:#d6d7da">:21</div>
<div class="a" style="left:1173.5px;top:914px;width:2px;height:15px;background:#676a72"></div>
<div class="t" style="left:1179.0px;top:917.7px;font-size:10px;color:#d6d7da">:22</div>
<div class="a" style="left:1225.9px;top:914px;width:2px;height:15px;background:#676a72"></div>
<div class="t" style="left:1231.4px;top:917.7px;font-size:10px;color:#d6d7da">:23</div>
<div class="a" style="left:1278.2px;top:914px;width:2px;height:15px;background:#676a72"></div>
<div class="t" style="left:1283.7px;top:917.7px;font-size:10px;color:#d6d7da">:24</div>
<div class="a" style="left:1330.6px;top:914px;width:2px;height:15px;background:#676a72"></div>
<div class="t" style="left:1336.1px;top:917.7px;font-size:10px;color:#d6d7da">:25</div>
<div class="a" style="left:1383.0px;top:914px;width:2px;height:15px;background:#676a72"></div>
<div class="t" style="left:1388.5px;top:917.7px;font-size:10px;color:#d6d7da">:26</div>
<div class="a" style="left:1435.3px;top:914px;width:2px;height:15px;background:#676a72"></div>
<div class="t" style="left:1440.8px;top:917.7px;font-size:10px;color:#d6d7da">:27</div>
<div class="a" style="left:1487.7px;top:914px;width:2px;height:15px;background:#676a72"></div>
<div class="t" style="left:1493.2px;top:917.7px;font-size:10px;color:#d6d7da">:28</div>
<div class="a" style="left:1540.0px;top:914px;width:2px;height:15px;background:#676a72"></div>
<div class="a" style="left:0;top:949px;width:1546px;height:50px;background:#262932"></div>
<div class="a" style="left:0;top:949px;width:21px;height:50px;background:#33363e"></div>
<div class="t" style="left:7px;top:969.2px;font-size:10.5px;color:#eef0f3">1</div>
<div class="a" style="left:1546px;top:914px;width:13px;height:366px;background:#1d2029"></div>
<div class="a" style="left:1547px;top:914px;width:11px;height:81px;border-radius:5.5px;background:#3d4049"></div>
<div class="a" style="left:0;top:1278px;width:690px;height:2px;background:#4a4d55"></div>
<svg width="0" height="0" style="position:absolute"><defs>
<linearGradient id="fg1" x1="0" y1="0" x2="1" y2="0"><stop offset="0" stop-color="#0846c4"/><stop offset="0.6" stop-color="#073cb4"/><stop offset="1" stop-color="#05309c"/></linearGradient>
<linearGradient id="fg2" x1="0" y1="0" x2="1" y2="0"><stop offset="0" stop-color="#0a4ac8"/><stop offset="1" stop-color="#0838ac"/></linearGradient>
<linearGradient id="jg" x1="0" y1="0" x2="1" y2="0"><stop offset="0" stop-color="#168ee6"/><stop offset="0.45" stop-color="#0c62dc"/><stop offset="1" stop-color="#0a3fcc"/></linearGradient>
<symbol id="fish" viewBox="0 0 66 26"><rect width="66" height="26" fill="url(#fg1)"/><g fill="#3c96d8" opacity="0.7"><ellipse cx="10.9" cy="17.6" rx="3.1" ry="1.3"/><ellipse cx="14.3" cy="20.0" rx="3.5" ry="1.3"/><ellipse cx="33.3" cy="6.7" rx="1.5" ry="1.2"/><ellipse cx="38.6" cy="2.7" rx="3.5" ry="1.0"/><ellipse cx="15.4" cy="2.0" rx="4.0" ry="1.5"/><ellipse cx="57.8" cy="15.8" rx="1.6" ry="1.1"/><ellipse cx="32.8" cy="3.8" rx="3.9" ry="1.2"/><ellipse cx="10.2" cy="20.6" rx="1.8" ry="1.7"/><ellipse cx="29.9" cy="14.2" rx="2.4" ry="1.3"/><ellipse cx="12.3" cy="1.9" rx="3.7" ry="1.0"/><ellipse cx="51.5" cy="6.0" rx="3.9" ry="1.7"/><ellipse cx="49.8" cy="19.3" rx="3.0" ry="1.5"/><ellipse cx="8.1" cy="12.4" rx="3.6" ry="1.0"/><ellipse cx="60.9" cy="22.3" rx="2.5" ry="1.2"/><ellipse cx="29.8" cy="10.3" rx="4.0" ry="1.2"/><ellipse cx="1.8" cy="3.2" rx="3.3" ry="1.8"/></g></symbol>
<symbol id="fish2" viewBox="0 0 66 26"><rect width="66" height="26" fill="url(#fg2)"/><g fill="#48a0dc" opacity="0.7"><ellipse cx="32.7" cy="12.8" rx="2.9" ry="1.5"/><ellipse cx="14.7" cy="15.6" rx="2.9" ry="1.4"/><ellipse cx="11.9" cy="5.1" rx="2.4" ry="1.7"/><ellipse cx="22.9" cy="15.3" rx="2.3" ry="0.9"/><ellipse cx="4.3" cy="20.5" rx="3.4" ry="1.2"/><ellipse cx="45.1" cy="17.2" rx="3.7" ry="1.8"/><ellipse cx="26.9" cy="24.7" rx="3.9" ry="1.4"/><ellipse cx="58.3" cy="12.8" rx="2.4" ry="1.0"/><ellipse cx="57.8" cy="4.9" rx="1.7" ry="1.6"/><ellipse cx="51.1" cy="12.6" rx="3.6" ry="0.9"/><ellipse cx="17.0" cy="8.0" rx="2.5" ry="1.0"/><ellipse cx="4.6" cy="9.1" rx="3.7" ry="1.8"/><ellipse cx="49.2" cy="12.5" rx="2.1" ry="1.8"/><ellipse cx="34.7" cy="18.5" rx="1.6" ry="1.0"/><ellipse cx="55.3" cy="20.1" rx="3.7" ry="1.4"/><ellipse cx="28.1" cy="14.9" rx="3.6" ry="1.1"/><ellipse cx="35.3" cy="7.6" rx="3.4" ry="0.8"/><ellipse cx="45.2" cy="23.9" rx="1.6" ry="1.4"/><ellipse cx="42.5" cy="21.4" rx="3.0" ry="1.1"/><ellipse cx="26.8" cy="24.0" rx="3.8" ry="0.9"/></g></symbol>
<symbol id="jelly" viewBox="0 0 66 26"><rect width="66" height="26" fill="url(#jg)"/>
<g fill="none" stroke-width="1.6"><path d="M14 26 C16 18 20 10 24 3" stroke="#e0905a"/><path d="M28 26 C24 20 28 12 36 6" stroke="#d08868"/><path d="M10 26 C12 20 16 12 19 4" stroke="#a9c8e8" stroke-width="0.8"/><path d="M33 26 C30 18 36 12 44 8" stroke="#a9c8e8" stroke-width="0.8"/></g>
<ellipse cx="46" cy="2" rx="5" ry="3.5" fill="#e8862a"/></symbol>
</defs></svg>
<div class="a" style="left:23px;top:949px;width:712px;height:50px;border-radius:5px;border:1px solid #cfd2d8;overflow:hidden;background:#fff">
<svg class="a" style="left:0;top:0" width="712" height="26">
<use href="#fish" x="0" y="0" width="66" height="26"/>
<use href="#fish" x="66" y="0" width="66" height="26"/>
<use href="#fish" x="132" y="0" width="66" height="26"/>
<use href="#fish2" x="198" y="0" width="66" height="26"/>
<use href="#fish" x="264" y="0" width="66" height="26"/>
<use href="#fish2" x="330" y="0" width="66" height="26"/>
<use href="#fish" x="396" y="0" width="66" height="26"/>
<use href="#fish2" x="462" y="0" width="66" height="26"/>
<use href="#fish" x="528" y="0" width="66" height="26"/>
<use href="#fish2" x="594" y="0" width="66" height="26"/>
<use href="#fish" x="660" y="0" width="66" height="26"/>
<g fill="#110c14">
<path d="M0 0 H12 Q18 4 17 14 Q15 20 14 26 H0 Z"/>
<path d="M41 26 Q38 14 44 4 Q48 0 52 0 H66 V26 Z"/>
<path d="M66 0 H80 Q86 6 85 14 Q84 20 85 26 H66 Z"/>
<path d="M110 26 Q108 14 114 4 Q118 0 122 0 H131 V26 Z"/>
<path d="M133 26 Q133 16 144 15 Q155 16 156 26 Z"/>
<path d="M180 26 Q181 18 190 17 Q197 17 197 18 V26 Z"/>
</g>
<g stroke="#3ab8e8" stroke-width="0.8" fill="none" opacity="0.8"><path d="M18 8 Q16 14 18 20"/><path d="M40 8 Q42 14 40 20"/><path d="M86 8 Q84 14 86 20"/><path d="M109 8 Q111 14 109 20"/></g>
</svg>
<div class="a" style="left:0;top:26px;width:712px;height:24px;background:#fff"></div>
<svg class="a" style="left:0;top:26px" width="712" height="24"><rect width="712" height="7" fill="#66b6a4"/><path d="M0 22 L0 7.5 L0 6.1 L2 5.8 L4 5.3 L6 5.0 L8 6.1 L10 5.7 L12 5.6 L14 6.2 L16 4.9 L18 5.2 L20 6.4 L22 5.4 L24 6.4 L26 5.6 L28 4.9 L30 4.8 L32 5.1 L34 4.8 L36 6.3 L38 6.1 L40 5.7 L42 6.0 L44 5.8 L46 5.4 L48 4.9 L50 4.8 L52 4.7 L54 6.2 L56 4.8 L58 5.5 L60 6.1 L62 5.5 L64 6.4 L66 2.3 L68 5.8 L70 6.0 L72 3.1 L74 6.4 L76 5.9 L78 4.7 L80 4.7 L82 6.4 L84 6.4 L86 5.8 L88 3.6 L90 5.9 L92 4.9 L94 5.7 L96 5.3 L98 5.5 L100 4.8 L102 5.7 L104 6.1 L106 4.7 L108 4.3 L110 3.6 L112 3.5 L114 5.7 L116 5.9 L118 5.0 L120 5.3 L122 6.0 L124 5.4 L126 5.8 L128 5.8 L130 6.0 L132 3.4 L134 5.2 L136 6.1 L138 6.1 L140 5.7 L142 6.3 L144 5.9 L146 5.7 L148 6.2 L150 5.3 L152 5.7 L154 6.3 L156 6.2 L158 5.0 L160 6.0 L162 5.3 L164 5.9 L166 6.0 L168 6.0 L170 5.7 L172 5.8 L174 3.4 L176 4.9 L178 5.7 L180 4.8 L182 5.2 L184 5.3 L186 6.0 L188 4.3 L190 6.0 L192 6.4 L194 5.3 L196 4.9 L198 3.2 L200 6.2 L202 5.3 L204 5.8 L206 5.4 L208 6.0 L210 5.6 L212 5.9 L214 5.5 L216 6.2 L218 4.8 L220 3.1 L222 4.1 L224 6.0 L226 5.7 L228 4.9 L230 6.3 L232 6.4 L234 3.5 L236 5.9 L238 5.9 L240 5.4 L242 6.2 L244 6.3 L246 5.2 L248 6.4 L250 5.8 L252 5.1 L254 5.1 L256 5.7 L258 5.6 L260 5.7 L262 5.7 L264 5.5 L266 6.4 L268 5.7 L270 4.8 L272 4.9 L274 6.0 L276 6.3 L278 5.3 L280 5.1 L282 5.2 L284 6.3 L286 6.5 L288 4.8 L290 6.3 L292 3.7 L294 6.3 L296 5.3 L298 4.8 L300 2.8 L302 5.6 L304 6.3 L306 3.8 L308 5.5 L310 6.1 L312 6.1 L314 5.1 L316 5.8 L318 5.9 L320 6.4 L322 4.7 L324 5.2 L326 5.3 L328 5.3 L330 5.6 L332 4.9 L334 6.3 L336 4.9 L338 5.7 L340 6.2 L342 6.1 L344 5.9 L346 5.3 L348 6.0 L350 5.8 L352 5.4 L354 4.7 L356 5.8 L358 5.9 L360 5.1 L362 4.7 L364 5.4 L366 5.0 L368 5.5 L370 5.2 L372 5.8 L374 4.8 L376 6.1 L378 5.2 L380 4.8 L382 6.1 L384 6.0 L386 5.2 L388 4.9 L390 4.9 L392 5.7 L394 3.8 L396 6.0 L398 5.5 L400 6.5 L402 5.7 L404 6.1 L406 4.8 L408 5.5 L410 6.0 L412 6.3 L414 2.0 L416 5.8 L418 5.1 L420 5.3 L422 5.0 L424 5.1 L426 5.3 L428 6.3 L430 5.9 L432 5.3 L434 6.2 L436 5.4 L438 4.9 L440 6.3 L442 6.2 L444 5.2 L446 5.5 L448 5.7 L450 4.0 L452 5.1 L454 5.2 L456 6.0 L458 3.4 L460 6.1 L462 5.9 L464 5.8 L466 5.1 L468 5.0 L470 5.7 L472 5.1 L474 6.2 L476 5.8 L478 5.0 L480 5.4 L482 5.8 L484 5.6 L486 6.1 L488 2.7 L490 4.9 L492 5.8 L494 5.5 L496 4.7 L498 6.0 L500 5.6 L502 2.9 L504 5.3 L506 5.6 L508 6.2 L510 6.4 L512 5.3 L514 5.5 L516 4.9 L518 5.1 L520 6.4 L522 4.5 L524 4.8 L526 4.9 L528 6.3 L530 5.4 L532 5.2 L534 5.9 L536 4.8 L538 5.7 L540 5.6 L542 5.8 L544 6.2 L546 5.2 L548 5.7 L550 6.0 L552 5.1 L554 6.2 L556 5.2 L558 5.8 L560 5.4 L562 6.5 L564 5.1 L566 5.7 L568 6.1 L570 5.8 L572 6.5 L574 6.2 L576 5.0 L578 5.8 L580 6.4 L582 2.9 L584 4.7 L586 6.2 L588 5.9 L590 6.4 L592 6.0 L594 5.7 L596 6.0 L598 6.0 L600 5.4 L602 6.3 L604 4.8 L606 6.2 L608 6.0 L610 5.3 L612 6.1 L614 5.6 L616 4.8 L618 6.4 L620 5.4 L622 6.3 L624 5.0 L626 5.8 L628 5.3 L630 6.2 L632 5.2 L634 5.5 L636 5.8 L638 6.1 L640 5.6 L642 6.2 L644 5.4 L646 5.8 L648 6.2 L650 6.5 L652 5.1 L654 6.3 L656 5.0 L658 4.9 L660 5.7 L662 5.2 L664 4.6 L666 4.8 L668 5.5 L670 6.4 L672 5.6 L674 5.3 L676 6.5 L678 4.8 L680 5.5 L682 5.1 L684 5.1 L686 6.2 L688 6.4 L690 3.4 L692 6.1 L694 6.3 L696 6.1 L698 5.4 L700 5.1 L702 5.9 L704 5.7 L706 5.0 L708 5.0 L710 5.5 L712 4.2 L712 7.5 L712 22 Z" fill="#ffffff"/><rect x="0" y="6.5" width="712" height="1.6" fill="#f0a8ec" opacity="0.9"/><path d="M0 7 H5 Q4 16 4 23 H0 Z" fill="#66b6a4"/></svg>
<div class="a" style="left:10px;top:17px;width:2.5px;height:13px;background:#e8e8e8;border-radius:1px"></div>
<div class="a" style="left:698px;top:17px;width:2.5px;height:13px;background:#e8e8e8;border-radius:1px"></div>
</div>
<div class="a" style="left:735px;top:949px;width:695px;height:50px;border-radius:5px;border:1px solid #cfd2d8;overflow:hidden;background:#fff">
<svg class="a" style="left:0;top:0" width="695" height="26">
<use href="#jelly" x="0" y="0" width="66" height="26"/>
<use href="#jelly" x="66" y="0" width="66" height="26"/>
<use href="#jelly" x="132" y="0" width="66" height="26"/>
<use href="#jelly" x="198" y="0" width="66" height="26"/>
<use href="#jelly" x="264" y="0" width="66" height="26"/>
<use href="#jelly" x="330" y="0" width="66" height="26"/>
<use href="#jelly" x="396" y="0" width="66" height="26"/>
<use href="#jelly" x="462" y="0" width="66" height="26"/>
<use href="#jelly" x="528" y="0" width="66" height="26"/>
<use href="#jelly" x="594" y="0" width="66" height="26"/>
<use href="#jelly" x="660" y="0" width="66" height="26"/>
</svg>
<svg class="a" style="left:0;top:26px" width="695" height="24"><rect width="695" height="7" fill="#66b6a4"/><path d="M0 22 L0 7.5 L0 5.4 L2 5.1 L4 5.2 L6 6.4 L8 4.8 L10 4.9 L12 5.7 L14 5.5 L16 6.5 L18 6.0 L20 5.1 L22 5.1 L24 5.4 L26 6.5 L28 6.1 L30 4.7 L32 6.0 L34 5.5 L36 6.1 L38 5.3 L40 4.9 L42 5.8 L44 5.3 L46 3.4 L48 5.9 L50 5.0 L52 5.9 L54 2.3 L56 6.5 L58 2.6 L60 5.8 L62 5.9 L64 4.8 L66 5.1 L68 4.8 L70 5.9 L72 5.1 L74 5.2 L76 2.1 L78 6.3 L80 5.4 L82 5.9 L84 5.5 L86 5.9 L88 6.4 L90 5.3 L92 3.2 L94 5.5 L96 6.1 L98 5.0 L100 3.0 L102 6.4 L104 5.0 L106 5.2 L108 5.4 L110 6.3 L112 6.2 L114 6.0 L116 4.7 L118 4.7 L120 5.6 L122 5.6 L124 5.8 L126 5.8 L128 4.8 L130 5.6 L132 6.3 L134 5.1 L136 5.8 L138 5.1 L140 5.3 L142 5.8 L144 6.0 L146 5.1 L148 6.0 L150 5.3 L152 6.5 L154 6.0 L156 5.7 L158 5.3 L160 5.9 L162 5.2 L164 5.9 L166 4.9 L168 4.7 L170 5.6 L172 6.2 L174 4.8 L176 5.3 L178 5.2 L180 5.1 L182 5.3 L184 5.4 L186 5.4 L188 6.5 L190 5.7 L192 6.1 L194 3.9 L196 5.7 L198 5.9 L200 4.8 L202 5.8 L204 5.4 L206 3.7 L208 6.0 L210 6.3 L212 4.0 L214 6.3 L216 5.9 L218 4.8 L220 5.7 L222 5.3 L224 6.2 L226 5.5 L228 4.8 L230 5.9 L232 6.5 L234 5.5 L236 6.2 L238 4.9 L240 5.7 L242 6.0 L244 5.8 L246 4.9 L248 6.0 L250 5.6 L252 5.9 L254 5.6 L256 5.6 L258 5.4 L260 6.0 L262 3.4 L264 6.0 L266 5.1 L268 6.0 L270 4.7 L272 5.4 L274 5.3 L276 5.2 L278 5.1 L280 5.5 L282 6.0 L284 5.7 L286 5.2 L288 6.4 L290 5.7 L292 4.9 L294 6.5 L296 5.7 L298 5.2 L300 5.6 L302 5.8 L304 5.0 L306 6.0 L308 6.4 L310 5.2 L312 6.0 L314 4.9 L316 5.6 L318 5.6 L320 6.2 L322 4.3 L324 5.0 L326 3.1 L328 4.7 L330 2.7 L332 6.1 L334 4.8 L336 6.3 L338 4.8 L340 5.4 L342 6.2 L344 6.4 L346 5.6 L348 5.5 L350 4.9 L352 5.7 L354 5.4 L356 4.8 L358 6.4 L360 6.2 L362 5.6 L364 5.5 L366 6.0 L368 6.0 L370 5.6 L372 6.1 L374 5.2 L376 5.2 L378 6.3 L380 6.3 L382 5.4 L384 4.9 L386 5.9 L388 6.4 L390 6.4 L392 4.8 L394 6.1 L396 4.7 L398 5.0 L400 5.4 L402 6.1 L404 5.4 L406 5.8 L408 5.0 L410 5.1 L412 5.0 L414 5.4 L416 5.2 L418 5.7 L420 6.4 L422 5.6 L424 6.5 L426 4.9 L428 5.7 L430 6.3 L432 6.2 L434 5.8 L436 6.2 L438 6.0 L440 6.0 L442 2.9 L444 5.8 L446 5.3 L448 5.7 L450 6.3 L452 6.0 L454 5.2 L456 5.4 L458 6.4 L460 4.7 L462 5.9 L464 6.0 L466 5.2 L468 6.1 L470 4.8 L472 5.7 L474 4.2 L476 4.1 L478 4.7 L480 5.7 L482 4.9 L484 4.1 L486 6.4 L488 6.4 L490 5.8 L492 3.5 L494 6.2 L496 5.8 L498 6.3 L500 6.3 L502 4.8 L504 5.0 L506 6.5 L508 5.6 L510 5.8 L512 5.2 L514 5.9 L516 5.0 L518 6.3 L520 6.3 L522 5.0 L524 5.5 L526 6.3 L528 5.5 L530 6.4 L532 6.4 L534 6.0 L536 6.3 L538 5.9 L540 5.5 L542 5.3 L544 5.5 L546 5.0 L548 4.8 L550 5.2 L552 5.0 L554 5.8 L556 6.0 L558 3.7 L560 5.3 L562 6.3 L564 5.0 L566 5.4 L568 5.7 L570 4.2 L572 5.0 L574 6.3 L576 6.2 L578 5.7 L580 5.1 L582 5.9 L584 5.7 L586 5.7 L588 4.8 L590 4.8 L592 6.3 L594 2.8 L596 6.4 L598 5.6 L600 5.8 L602 6.0 L604 5.5 L606 5.1 L608 5.9 L610 4.7 L612 5.0 L614 5.8 L616 5.0 L618 6.4 L620 6.3 L622 4.9 L624 5.1 L626 5.3 L628 5.4 L630 4.3 L632 5.4 L634 5.8 L636 6.5 L638 5.8 L640 5.2 L642 4.7 L644 4.8 L646 5.3 L648 5.1 L650 5.4 L652 5.6 L654 5.3 L656 5.5 L658 5.2 L660 4.8 L662 3.0 L664 5.3 L666 4.9 L668 5.0 L670 5.4 L672 5.6 L674 6.1 L676 5.5 L678 6.5 L680 6.2 L682 4.9 L684 5.4 L686 6.3 L688 5.5 L690 5.8 L692 6.1 L694 6.0 L695 7.5 L695 22 Z" fill="#ffffff"/><rect x="0" y="6.5" width="695" height="1.6" fill="#f0a8ec" opacity="0.9"/><path d="M0 7 H5 Q4 16 4 23 H0 Z" fill="#66b6a4"/></svg>
<div class="a" style="left:9px;top:17px;width:2.5px;height:13px;background:#e8e8e8;border-radius:1px"></div>
<div class="a" style="left:680px;top:17px;width:2.5px;height:13px;background:#e8e8e8;border-radius:1px"></div>
</div>
<div class="a" style="left:21px;top:914px;width:2px;height:366px;background:#fff"></div>
<svg class="a" style="left:15px;top:914px" width="14" height="17" viewBox="0 0 14 17"><path d="M0 0 H14 V8 L7 16.5 L0 8 Z" fill="#fff"/></svg>
<!-- ARROW -->
<svg class="a" style="left:0;top:0;z-index:50" width="1559" height="1280" viewBox="0 0 1559 1280">
 <path d="M83 476.5 L502.3 702.3" stroke="#fdd82b" stroke-width="6.8" stroke-linecap="butt"/>
 <path d="M48 458.5 L91.2 463 L85.2 473.4 L80.6 480.6 L75.8 491.2 Z" fill="#fdd82b"/>
</svg>
</body></html>
